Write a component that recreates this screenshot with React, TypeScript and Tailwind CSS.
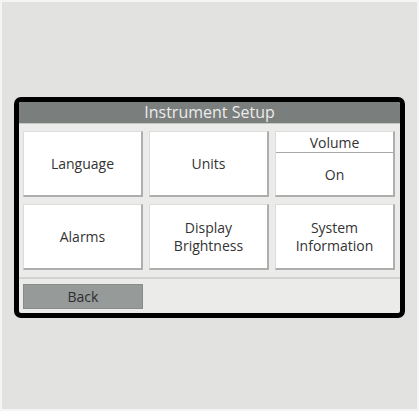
import type { ReactNode } from 'react';

function Card({ children }: { children: ReactNode }) {
  return (
    <button
      type="button"
      className="flex h-[66px] items-center justify-center border-t border-l border-[#dcdcdc] border-r-2 border-b-2 border-r-[#aeaeae] border-b-[#aeaeae] bg-white text-center text-[14px] leading-[18px] text-[#333]"
    >
      {children}
    </button>
  );
}

export default function App() {
  return (
    <div
      className="h-[411px] w-[419px] border-2 border-[#f4f5f4] bg-[#e2e3e1]"
      style={{ fontFamily: '"Open Sans", "Noto Sans", sans-serif' }}
    >
      <div className="ml-[12px] mt-[95px] h-[221px] w-[391px] overflow-hidden rounded-[7px] border-[5px] border-black bg-[#ebecea]">
        <div className="h-[21px] rounded-t-[2px] bg-[#7a7e7d] text-center text-[16px] leading-[21px] text-[#ececec]">
          Instrument Setup
        </div>
        <div className="h-[1px] bg-[#c6c8c7]" />

        <div className="grid grid-cols-3 gap-x-[6px] gap-y-[7px] pl-[4px] pr-[5px] pt-[7px]">
          <Card>Language</Card>
          <Card>Units</Card>
          <div className="flex h-[66px] flex-col border-t border-l border-[#dcdcdc] border-r-2 border-b-2 border-r-[#aeaeae] border-b-[#aeaeae] bg-white text-center text-[14px] text-[#333]">
            <div className="h-[21px] border-b border-[#a8a8a8] leading-[21px]">Volume</div>
            <div className="flex flex-1 items-center justify-center">On</div>
          </div>
          <Card>Alarms</Card>
          <Card>
            Display
            <br />
            Brightness
          </Card>
          <Card>
            System
            <br />
            Information
          </Card>
        </div>

        <div className="mt-[7px] h-[2px] bg-[#d2d3d2]" />
        <div className="pl-[4px] pt-[5px]">
          <button
            type="button"
            className="h-[25px] w-[120px] border border-[#888b8a] bg-[#969a99] text-[14px] leading-[23px] text-[#2e2e2e]"
          >
            Back
          </button>
        </div>
      </div>
    </div>
  );
}
